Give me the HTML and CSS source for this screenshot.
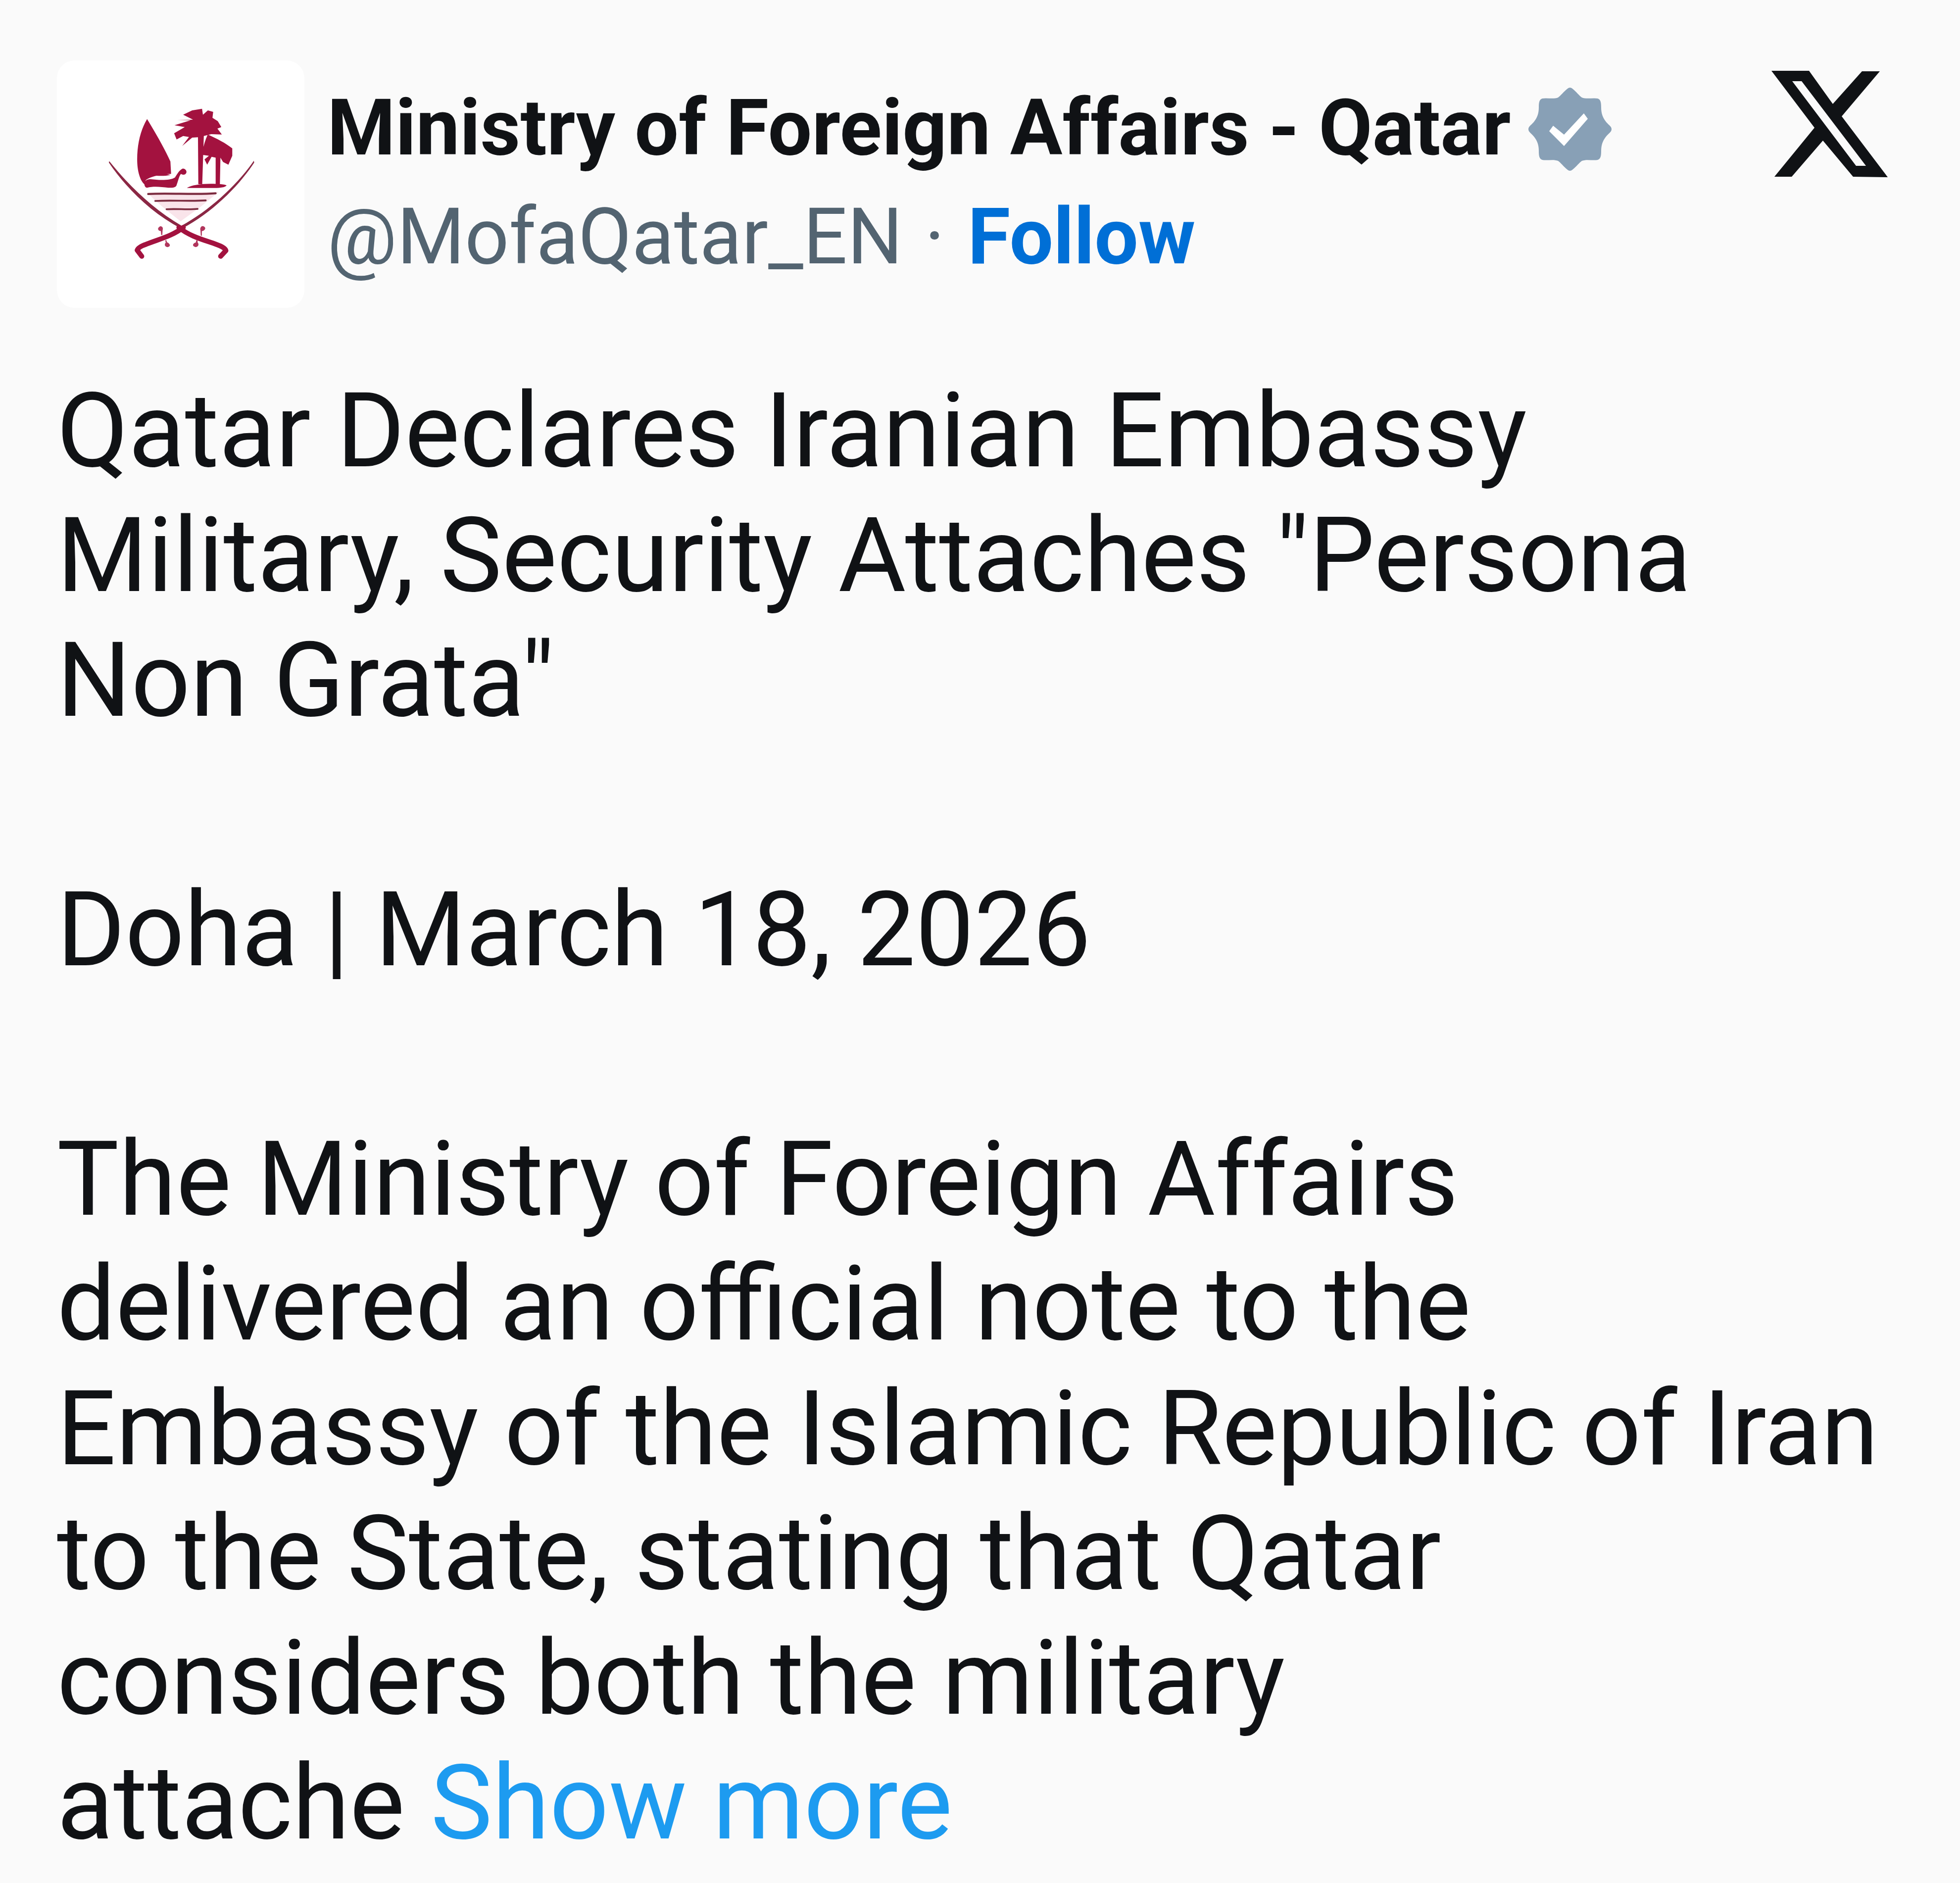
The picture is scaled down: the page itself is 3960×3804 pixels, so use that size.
FILE: index.html
```html
<!DOCTYPE html>
<html lang="en">
<head>
<meta charset="utf-8">
<title>Ministry of Foreign Affairs - Qatar</title>
<link rel="stylesheet" href="styles.css">
</head>
<body>
<main class="card">
  <header class="head">
    <div class="avatar">
      <svg class="emblem" viewBox="70 90 1400 1400" xmlns="http://www.w3.org/2000/svg">
        <g fill="#a3123f">
          <path d="M580 422C545 480 524 560 524 650C524 715 540 770 566 792L572 768C600 745 660 735 716 732L712 662C680 590 625 495 580 422Z"/>
          <path d="M566 782C570 768 580 762 600 762C650 768 710 770 738 752C750 735 760 712 782 702C796 702 806 715 802 726C796 738 782 740 772 732C762 742 758 765 748 792C745 808 730 812 700 810C660 806 620 800 580 810C570 810 562 796 566 782Z"/>
          <path d="M608 738C640 728 680 728 712 738C680 745 640 745 608 738Z"/>
          <path d="M835 373L891 364L896 397L924 373L954 381L950 415L980 434L1000 467L978 476L1003 509L943 507L901 518L892 790L870 790L868 525L835 527L779 574L817 523L784 518L747 537L733 502L793 467L735 457L826 429L751 429L840 425L784 397Z"/>
          <path d="M896 590C905 555 915 525 924 509C970 530 1030 560 1062 588L1062 630L1040 680L1010 665L995 640L992 790L968 790L968 640L945 635L920 680L905 650L930 630L896 625Z"/>
          <path d="M805 812C830 796 880 788 940 788C980 788 1020 790 1030 798C1020 808 1000 812 960 812Z"/>
          <path d="M752 968H802C798 985 760 990 752 968Z"/>
          <path d="M655 1028C668 1028 672 1040 668 1050L666 1078L660 1078L658 1056C645 1055 632 1040 655 1028Z" opacity=".85"/>
          <path d="M898 1028C885 1025 878 1040 882 1052L884 1082L890 1082L890 1056C905 1055 920 1036 898 1028Z" opacity=".85"/>
          <path d="M682 1108L690 1108L692 1118C710 1125 718 1142 695 1146C680 1146 676 1130 686 1120Z" opacity=".85"/>
          <path d="M866 1108L858 1108L856 1120C838 1125 832 1142 855 1146C870 1146 876 1130 866 1120Z" opacity=".85"/>
        </g>
        <path d="M580 836L985 834L880 920L770 1000C720 960 640 900 580 836Z" fill="#f9e4ea"/>
        <g fill="none" stroke="#7a2a3e" stroke-linecap="round">
          <path d="M586 846C700 838 850 852 968 842" stroke-width="11"/>
          <path d="M626 885C720 880 830 888 912 882" stroke-width="10"/>
          <path d="M690 932C750 928 810 936 866 930" stroke-width="10"/>
        </g>
        <g fill="#8b2744">
          <path d="M366 660C470 790 610 930 775 1025L770 1040C600 950 460 810 364 668Z"/>
          <path d="M1184 658C1085 800 930 940 775 1025L780 1040C950 950 1100 800 1186 668Z"/>
        </g>
        <g fill="none" stroke="#a3123f" stroke-linecap="round" stroke-linejoin="round">
          <path d="M785 1035C720 1085 650 1100 575 1130C545 1140 528 1152 524 1164L550 1198" stroke-width="28"/>
          <path d="M760 1035C820 1085 900 1105 970 1130C1005 1142 1024 1155 1026 1166L996 1198" stroke-width="28"/>
        </g>
      </svg>
    </div>
    <div class="identity">
      <div class="name-row">
        <span class="name">Ministry of Foreign Affairs - Qatar</span>
        <svg class="badge" viewBox="0 0 168 168" xmlns="http://www.w3.org/2000/svg">
          <path d="M84 0C90 0 100 14 108 20C118 24 130 20 140 22C146 24 147 30 147 40C147 52 150 60 156 68C162 76 168 78 168 84C168 90 162 92 156 100C150 108 147 116 147 128C147 138 146 144 140 146C130 148 118 144 108 148C100 154 90 168 84 168C78 168 68 154 60 148C50 144 38 148 28 146C22 144 21 138 21 128C21 116 18 108 12 100C6 92 0 90 0 84C0 78 6 76 12 68C18 60 21 52 21 40C21 30 22 24 28 22C38 20 50 24 60 20C68 14 78 0 84 0Z" fill="#88a0b6"/>
          <path d="M42 88L50 77L72 95L112 52L120 63L72 118Z" fill="#fff"/>
        </svg>
      </div>
      <div class="handle-row">
        <span class="handle">@MofaQatar_EN</span>
        <span class="dot">·</span>
        <span class="follow">Follow</span>
      </div>
    </div>
    <svg class="xlogo" viewBox="0 0 235 215" xmlns="http://www.w3.org/2000/svg">
      <path fill-rule="evenodd" d="M0 0H76L124 67L183 1H219L142 92L235 215L165 214L104 141L41 214H6L87 115ZM42 21L171 192H191L61 21Z" fill="#101215"/>
    </svg>
  </header>
  <p class="body">Qatar Declares Iranian Embassy<br>Military, Security Attaches "Persona<br>Non Grata"<br><br>Doha | March 18, 2026<br><br>The Ministry of Foreign Affairs<br>delivered an official note to the<br>Embassy of the Islamic Republic of Iran<br>to the State, stating that Qatar<br>considers both the military<br>attache <span class="more">Show more</span></p>
</main>
</body>
</html>
```
FILE: styles.css
```css
html, body {
  margin: 0;
  padding: 0;
  background: #fafafa;
}
.card {
  width: 3960px;
  height: 3804px;
  box-sizing: border-box;
  padding: 122px 0 0 115px;
  overflow: hidden;
  font-family: Roboto, "Liberation Sans", sans-serif;
  color: #101215;
}
.head {
  display: flex;
  align-items: flex-start;
}
.avatar {
  flex: none;
  width: 500px;
  height: 500px;
  background: #fff;
  border-radius: 36px;
}
.emblem {
  display: block;
  width: 100%;
  height: 100%;
}
.identity {
  flex: none;
  margin-left: 46px;
  width: 2918px;
  padding-top: 56px;
}
.name-row {
  display: flex;
  align-items: center;
  height: 160px;
}
.name {
  font-weight: 700;
  font-size: 157.5px;
  line-height: 160px;
}
.badge {
  flex: none;
  width: 168px;
  height: 168px;
  margin-left: 36px;
  margin-top: 6px;
}
.handle-row {
  display: flex;
  align-items: baseline;
  font-size: 157px;
  line-height: 160px;
  margin-top: 60px;
}
.handle { color: #536471; }
.dot { color: #536471; margin: 0 46px 0 44px; }
.follow { color: #006fd6; font-weight: 700; }
.xlogo {
  flex: none;
  width: 235px;
  height: 215px;
  margin-top: 21px;
}
.body {
  margin: 122px 0 0;
  font-size: 210px;
  line-height: 252px;
  white-space: nowrap;
}
.more { color: #1d9bf0; }
```
